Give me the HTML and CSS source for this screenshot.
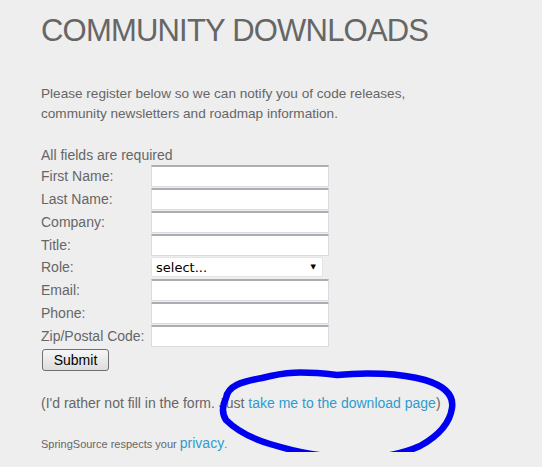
FILE: index.html
```html
<!DOCTYPE html>
<html lang="en">
<head>
  <meta charset="UTF-8" />
  <title>Community Downloads</title>
  <link rel="stylesheet" href="styles.css">
</head>
<body>
  <div class="page">
    <h1 class="title">COMMUNITY DOWNLOADS</h1>
    <p class="intro">Please register below so we can notify you of code releases,<br>community newsletters and roadmap information.</p>

    <form class="reg-form">
      <div class="required">All fields are required</div>
      <div class="row"><label>First Name:</label><input type="text" class="field"></div>
      <div class="row"><label>Last Name:</label><input type="text" class="field"></div>
      <div class="row"><label>Company:</label><input type="text" class="field"></div>
      <div class="row"><label>Title:</label><input type="text" class="field"></div>
      <div class="row row-select"><label>Role:</label>
        <div class="select"><span>select...</span><span class="arrow">&#9660;</span></div>
      </div>
      <div class="row"><label>Email:</label><input type="text" class="field"></div>
      <div class="row"><label>Phone:</label><input type="text" class="field"></div>
      <div class="row"><label>Zip/Postal Code:</label><input type="text" class="field"></div>
      <button type="button" class="submit">Submit</button>
    </form>

    <div class="skip">
      <p>(I'd rather not fill in the form. Just <a href="#">take me to the download page</a>)</p>
      <!-- hand drawn annotation -->
      <svg class="scribble" width="542" height="120" viewBox="0 360 542 120">
        <path d="M226 398 C228 386 240 382 262 378 C285 372 300 371 337 375 C365 372 400 373 425 380 C445 386 454 395 452 408 C450 422 440 435 420 446 C400 455 375 459 347 458 C320 456 300 453 270 444 C250 438 236 430 226 420 C221 412 223 404 226 398 Z" />
      </svg>
    </div>

    <p class="privacy">SpringSource respects your <a href="#">privacy</a>.</p>
  </div>
</body>
</html>
```
FILE: styles.css
```css
/* base */
* { box-sizing: border-box; }
html, body { margin: 0; padding: 0; }
body {
  background: #eeeeee;
  color: #666666;
  font-family: "Liberation Sans", Arial, sans-serif;
  font-size: 14px;
}
a { color: #2e9bce; text-decoration: none; }

.page { padding: 12px 0 0 41px; position: relative; }

/* heading + intro */
.title {
  margin: 0;
  font-size: 31px;
  letter-spacing: -0.8px;
  font-weight: normal;
  line-height: 38px;
  color: #666666;
}
.intro {
  margin: 34px 0 0;
  font-size: 13.6px;
  line-height: 20px;
}

/* form */
.reg-form { margin-top: 23px; }
.required { line-height: 16px; margin-bottom: 1px; }
.row {
  display: flex;
  align-items: center;
  height: 23px;
}
.row label { width: 110px; line-height: 16px; }
.field {
  width: 178px;
  height: 22px;
  margin: 0;
  padding: 0;
  background: #fff;
  border: 1px solid #dadbe0;
  border-top: 2px solid #abadb3;
  border-radius: 1px;
}
.row-select { height: 22px; }
.select {
  width: 172px;
  height: 20px;
  background: #fff;
  border: 1px solid #e3e3e3;
  border-radius: 2px;
  display: flex;
  align-items: center;
  justify-content: space-between;
  padding: 0 6px 0 4px;
  color: #000;
  font-family: "DejaVu Sans", Verdana, sans-serif;
  font-size: 13px;
}
.select .arrow { font-size: 7px; }
.submit {
  margin-top: 2px;
  margin-left: 1px;
  width: 67px;
  height: 22px;
  padding: 0;
  font-family: "Liberation Sans", Arial, sans-serif;
  font-size: 14px;
  color: #000;
  background: linear-gradient(#f6f6f6, #dddddd);
  border: 1px solid #707070;
  border-radius: 3px;
}

/* footer text */
.skip { margin-top: 24px; }
.skip p { margin: 0; line-height: 16px; }
.scribble {
  position: absolute;
  left: 0;
  top: 360px;
  pointer-events: none;
}
.scribble path {
  fill: none;
  stroke: #0000f0;
  stroke-width: 6.5;
  stroke-linejoin: round;
}
.privacy {
  margin: 24px 0 0;
  font-size: 11px;
  line-height: 16px;
}
.privacy a { font-size: 14px; }
```
